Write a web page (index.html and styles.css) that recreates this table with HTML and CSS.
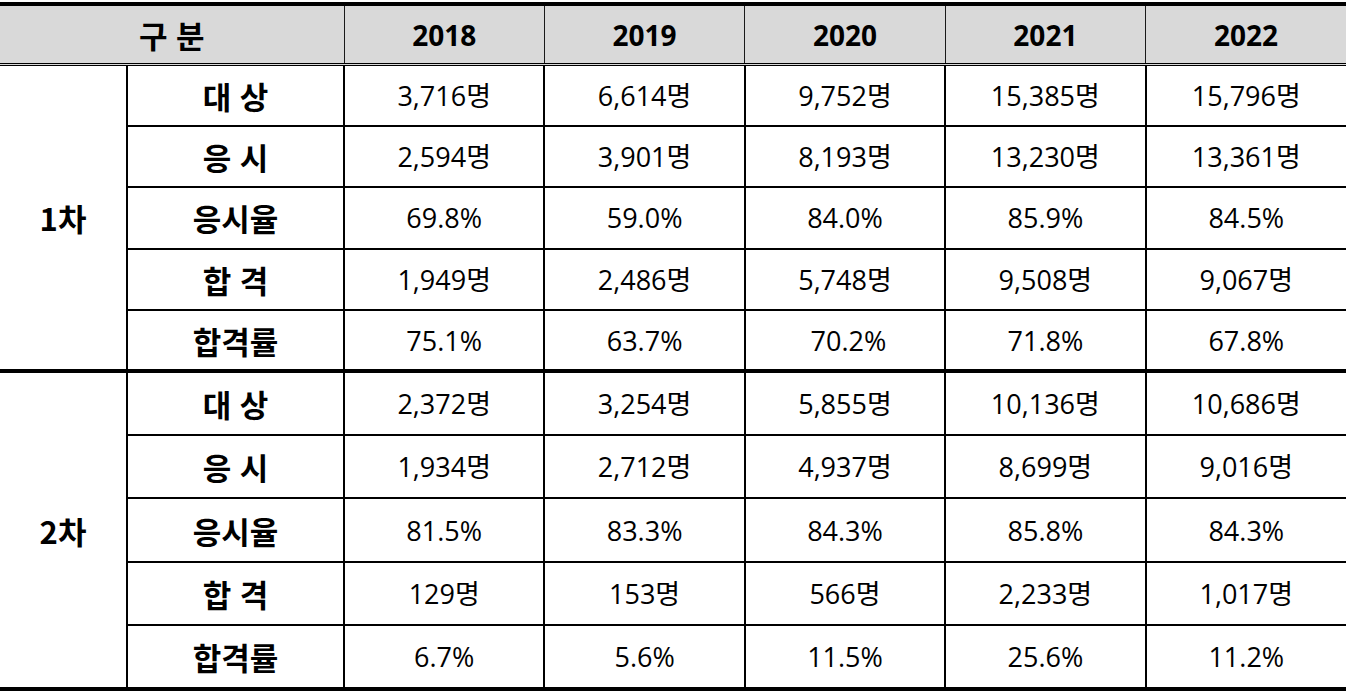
FILE: index.html
```html
<!DOCTYPE html>
<html lang="ko">
<head>
<meta charset="utf-8">
<title>시험 현황</title>
<link rel="stylesheet" href="styles.css">
</head>
<body>
<table class="stats">
  <colgroup>
    <col class="c-group">
    <col class="c-label">
    <col class="c-year">
    <col class="c-year">
    <col class="c-year">
    <col class="c-year">
    <col class="c-year">
  </colgroup>
  <thead>
    <tr>
      <th colspan="2" class="kr">구 분</th>
      <th>2018</th>
      <th>2019</th>
      <th>2020</th>
      <th>2021</th>
      <th>2022</th>
    </tr>
  </thead>
  <tbody class="first">
    <tr>
      <th class="group" rowspan="5">1차</th>
      <th class="label">대 상</th>
      <td>3,716명</td><td>6,614명</td><td>9,752명</td><td>15,385명</td><td>15,796명</td>
    </tr>
    <tr>
      <th class="label">응 시</th>
      <td>2,594명</td><td>3,901명</td><td>8,193명</td><td>13,230명</td><td>13,361명</td>
    </tr>
    <tr>
      <th class="label">응시율</th>
      <td>69.8%</td><td>59.0%</td><td>84.0%</td><td>85.9%</td><td>84.5%</td>
    </tr>
    <tr>
      <th class="label">합 격</th>
      <td>1,949명</td><td>2,486명</td><td>5,748명</td><td>9,508명</td><td>9,067명</td>
    </tr>
    <tr>
      <th class="label">합격률</th>
      <td>75.1%</td><td>63.7%</td><td>&nbsp;70.2%</td><td>71.8%</td><td>67.8%</td>
    </tr>
  </tbody>
  <tbody class="second">
    <tr>
      <th class="group" rowspan="5">2차</th>
      <th class="label">대 상</th>
      <td>2,372명</td><td>3,254명</td><td>5,855명</td><td>10,136명</td><td>10,686명</td>
    </tr>
    <tr>
      <th class="label">응 시</th>
      <td>1,934명</td><td>2,712명</td><td>4,937명</td><td>8,699명</td><td>9,016명</td>
    </tr>
    <tr>
      <th class="label">응시율</th>
      <td>81.5%</td><td>83.3%</td><td>84.3%</td><td>85.8%</td><td>84.3%</td>
    </tr>
    <tr>
      <th class="label">합 격</th>
      <td>129명</td><td>153명</td><td>566명</td><td>2,233명</td><td>1,017명</td>
    </tr>
    <tr>
      <th class="label">합격률</th>
      <td>6.7%</td><td>5.6%</td><td>11.5%</td><td>25.6%</td><td>11.2%</td>
    </tr>
  </tbody>
</table>
</body>
</html>
```

FILE: styles.css
```css
html, body {
  margin: 0;
  padding: 0;
  background: #fff;
}

body {
  padding-top: 2px;
  font-family: "Open Sans", "Noto Sans CJK KR", sans-serif;
  color: #000;
}

.stats {
  width: 1346px;
  table-layout: fixed;
  border-collapse: collapse;
  font-size: 27px;
  line-height: 1;
}

.c-group { width: 127px; }
.c-label { width: 217px; }
.c-year { width: 200.4px; }

.stats th,
.stats td {
  text-align: center;
  vertical-align: middle;
  padding: 0;
  border: 2px solid #000;
}

.stats tr > :first-child { border-left: none; }
.stats tr > :last-child { border-right: none; }
.stats .group { border-left: none; }

.stats thead th {
  height: 57px;
  background: #d9d9d9;
  font-weight: 700;
  font-size: 28px;
  border-top: 4px solid #000;
  border-bottom: 3px double #000;
  border-left: 1px solid #1a1a1a;
  border-right: 1px solid #1a1a1a;
}

.stats thead th.kr {
  font-family: "Noto Sans CJK KR", sans-serif;
  font-size: 31px;
}

.stats thead th:first-child { border-left: none; }
.stats thead th:last-child { border-right: none; }

.stats tbody th {
  font-weight: 700;
  font-family: "Noto Sans CJK KR", sans-serif;
  font-size: 31px;
}

.stats tbody td {
  font-weight: 400;
}

.stats tbody.first tr { height: 61.4px; }
.stats tbody.second tr { height: 63.5px; }

.stats tbody.first tr:last-child > * { border-bottom: 4px solid #000; }
.stats tbody.first .group { border-bottom: 4px solid #000; }

.stats tbody.second tr:last-child > * { border-bottom: 4px solid #000; }
.stats tbody.second .group { border-bottom: 4px solid #000; }
```
